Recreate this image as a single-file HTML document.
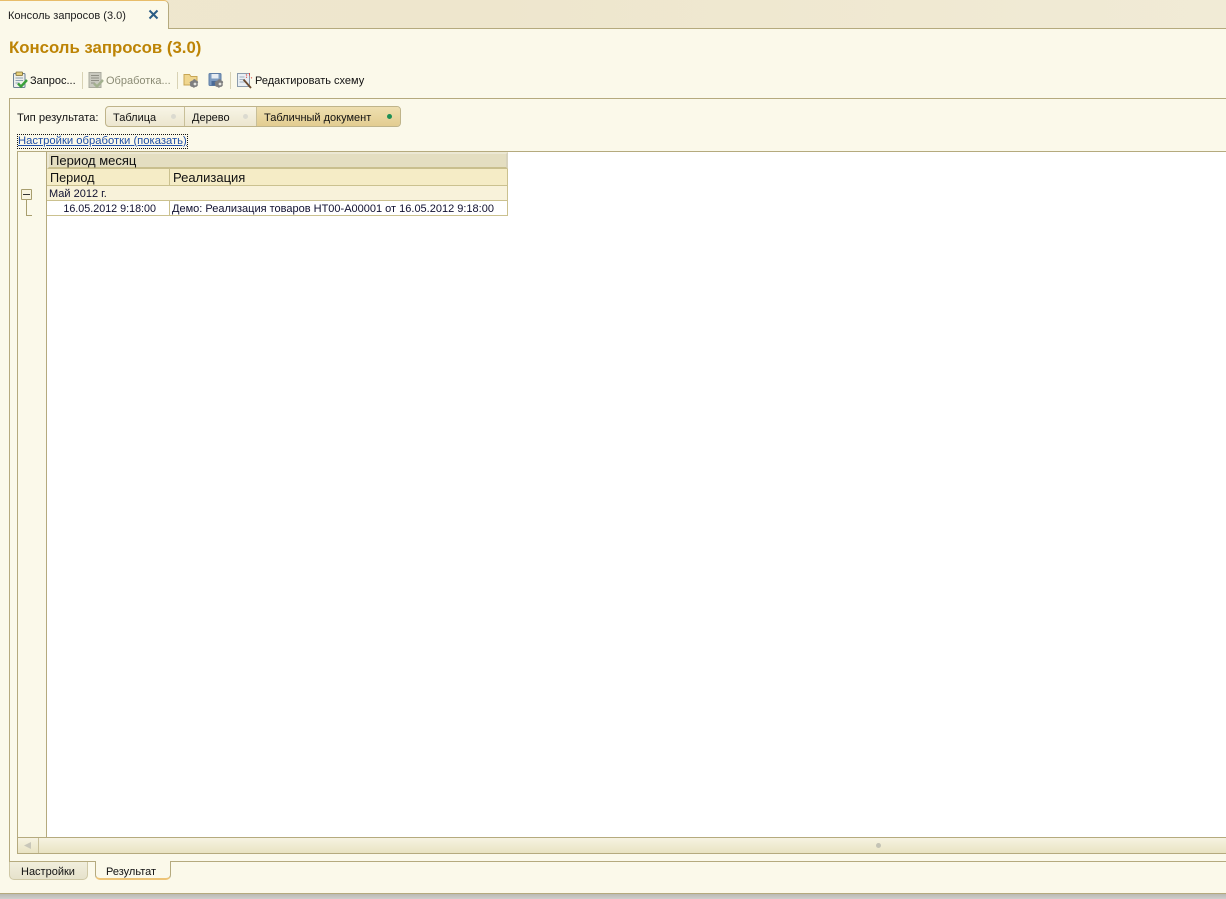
<!DOCTYPE html>
<html><head><meta charset="utf-8"><style>
html,body{margin:0;padding:0;width:1226px;height:899px;overflow:hidden;background:#fbf9ea;font-family:"Liberation Sans",sans-serif;color:#111}
div,a,span.a{position:absolute;box-sizing:border-box;white-space:nowrap}
svg{position:absolute}
.t{font-size:11px;line-height:14px}
.sep{width:1px;background:#d8d2b4;top:72px;height:17px}
</style></head><body>
<div style="left:0;top:0;width:1226px;height:29px;background:linear-gradient(90deg,#efe7ce,#eee6cd 40%,#f1ebd6);border-bottom:1px solid #b5aa7e"></div>
<div style="left:-3px;top:0;width:172px;height:29px;background:#fbf9ea;border:1px solid #b5aa7e;border-bottom:none;border-top:1px solid #e8bd6a;border-top-right-radius:5px"></div>
<div class="t" style="left:8px;top:9px;color:#1c1c1c">Консоль запросов (3.0)</div>
<svg style="left:148px;top:9px" width="11" height="11" viewBox="0 0 11 11"><path d="M1.500 1.500L9.500 9.500M9.500 1.500L1.500 9.500" stroke="#2b5d85" stroke-width="2"/></svg>
<div style="left:9px;top:38px;font-size:16.800px;line-height:20px;font-weight:bold;color:#bd8405">Консоль запросов (3.0)</div>

<svg style="left:12px;top:71px" width="17" height="18" viewBox="0 0 17 18"><rect x="1.500" y="2.500" width="11.500" height="14" rx="1" fill="#eef0ea" stroke="#6c8094"/><rect x="4" y="1" width="6.500" height="3.500" rx=".5" fill="#e6cf7a" stroke="#7c6c30" stroke-width=".8"/><path d="M3.500 7h7.500M3.500 9.500h7.500M3.500 12h4" stroke="#8ea0b2"/><path d="M6 12.500l3 3 6-6.500" stroke="#3aa03a" stroke-width="2.400" fill="none"/></svg>
<div class="t" style="left:30px;top:74px">Запрос...</div>
<div class="sep" style="left:82px"></div>
<svg style="left:88px;top:71px" width="17" height="18" viewBox="0 0 17 18"><rect x="1" y="1.500" width="12" height="15" fill="#c9c9bf" stroke="#aaaa9e"/><path d="M3 4.500h8M3 7h8M3 9.500h8M3 12h4" stroke="#8f8f85"/><path d="M6 12.500l3 3 6-6.500" stroke="#a3b18f" stroke-width="2.400" fill="none"/></svg>
<div class="t" style="left:106px;top:74px;color:#8b8b75">Обработка...</div>
<div class="sep" style="left:177px"></div>
<svg style="left:183px;top:72px" width="17" height="17" viewBox="0 0 17 17"><path d="M1 2.500h5.500l1.500 2h6v8.500H1z" fill="#f0d68e" stroke="#c8a755"/><path d="M8.200 8.700l1.800-.7.700-1.200h1.600l.7 1.200 1.800.7.600 1.300-.6 1.500.3 1.700-1.100 1.400-1.700.4-1.400.9-1.400-.9-1.700-.4-1.100-1.400.3-1.700-.6-1.500z" fill="#7f7f80" transform="translate(.4 .6) scale(.96)"/><circle cx="12" cy="12" r="1.400" fill="#e4e4e0"/></svg>
<svg style="left:208px;top:72px" width="17" height="17" viewBox="0 0 17 17"><rect x="1" y="1.500" width="12" height="12" rx="1" fill="#7d9bc0" stroke="#5f7ea6"/><rect x="3.500" y="2" width="7" height="4.500" fill="#e6ecf2"/><rect x="3.500" y="9" width="6" height="4.500" fill="#4a6a96"/><path d="M8.200 8.700l1.800-.7.700-1.200h1.600l.7 1.200 1.800.7.600 1.300-.6 1.500.3 1.700-1.100 1.400-1.700.4-1.400.9-1.400-.9-1.700-.4-1.100-1.400.3-1.700-.6-1.500z" fill="#7f7f80" transform="translate(.4 .6) scale(.96)"/><circle cx="12" cy="12" r="1.400" fill="#e4e4e0"/></svg>
<div class="sep" style="left:230px"></div>
<svg style="left:236px;top:72px" width="17" height="17" viewBox="0 0 17 17"><rect x="1.500" y="1.500" width="12" height="13" fill="#e9eff4" stroke="#8c9cac"/><path d="M3.500 5h5M3.500 7.500h4M3.500 10h5" stroke="#a3b1bf"/><path d="M7.500 7.500l7.500 8.500" stroke="#6b4a2e" stroke-width="1.800"/><path d="M10 2.500l1 1M13.500 1v2.500M15 5.500l1 .7M10 5.500l1-.5" stroke="#dc4a42"/></svg>
<div class="t" style="left:255px;top:74px">Редактировать схему</div>

<div style="left:9px;top:98px;width:1217px;height:764px;border-left:1px solid #b5aa7e;border-top:1px solid #b5aa7e;border-bottom:1px solid #b5aa7e"></div>
<div class="t" style="left:17px;top:111px;font-size:11.250px">Тип результата:</div>

<div style="left:105px;top:106px;width:296px;height:21px;border:1px solid #bfb48a;border-radius:4px;overflow:hidden;background:linear-gradient(#f8f5e6,#ece6cf)">
 <div style="left:150px;top:0;width:146px;height:20px;background:linear-gradient(#eedfb0,#e2cc8f)"></div>
 <div style="left:78px;top:0;width:1px;height:20px;background:#c8bf98"></div>
 <div style="left:150px;top:0;width:1px;height:20px;background:#c8bf98"></div>
</div>
<div class="t" style="left:113px;top:111px">Таблица</div>
<div style="left:171px;top:114px;width:5px;height:5px;border-radius:50%;background:#dbdad0"></div>
<div class="t" style="left:192px;top:111px">Дерево</div>
<div style="left:243px;top:114px;width:5px;height:5px;border-radius:50%;background:#dbdad0"></div>
<div class="t" style="left:264px;top:111px">Табличный документ</div>
<div style="left:387px;top:114px;width:5px;height:5px;border-radius:50%;background:#1d8f55"></div>

<div class="t" style="left:18px;top:135px;height:13px;line-height:13px;font-size:11.250px;color:#1f4fa8;text-decoration:underline;outline:1px dotted #111;outline-offset:0">Настройки обработки (показать)</div>

<div style="left:18px;top:151px;width:1208px;height:1px;background:#b5aa7e"></div>
<div style="left:17px;top:151px;width:1px;height:703px;background:#b5aa7e"></div>
<div style="left:46px;top:152px;width:1px;height:686px;background:#b5aa7e"></div>
<div style="left:47px;top:152px;width:1179px;height:686px;background:#fff"></div>

<div style="left:47px;top:152px;width:461px;height:17px;background:#e4dec1;border:2px solid #ece8d4;border-bottom:2px solid #c9bf8e;border-right-color:#d8d3bd"></div>
<div style="left:50px;top:153px;font-size:13px;line-height:16px">Период месяц</div>
<div style="left:47px;top:169px;width:461px;height:17px;background:#f5ecc6;border-bottom:1px solid #cbc18f;border-right:1px solid #cbc18f"></div>
<div style="left:169px;top:169px;width:1px;height:17px;background:#cbc18f"></div>
<div style="left:50px;top:170px;font-size:12.700px;line-height:16px">Период</div>
<div style="left:173px;top:170px;font-size:13px;line-height:16px">Реализация</div>
<div style="left:47px;top:186px;width:461px;height:15px;background:#f8f2da;border-bottom:1px solid #cbc18f;border-right:1px solid #cbc18f"></div>
<div style="left:49px;top:188px;font-size:11px;line-height:13px;color:#101030">Май 2012 г.</div>
<div style="left:47px;top:201px;width:461px;height:15px;background:#fff;border-bottom:1px solid #cbc18f;border-right:1px solid #cbc18f"></div>
<div style="left:169px;top:201px;width:1px;height:14px;background:#cbc18f"></div>
<div style="left:47px;top:203px;width:109px;text-align:right;font-size:10.750px;line-height:13px;color:#101030">16.05.2012 9:18:00</div>
<div style="left:172px;top:203px;font-size:11px;line-height:13px;color:#101030">Демо: Реализация товаров НТ00-А00001 от 16.05.2012 9:18:00</div>

<div style="left:21px;top:189px;width:11px;height:11px;background:#f8f4e0;border:1px solid #a89e6e;border-radius:1px"></div>
<div style="left:23px;top:194px;width:7px;height:1px;background:#333"></div>
<svg style="left:22px;top:200px" width="12" height="17" viewBox="0 0 12 17"><path d="M4.500 0V15.500H10" stroke="#a89e6e" fill="none"/></svg>

<div style="left:18px;top:837px;width:1208px;height:17px;background:linear-gradient(#f6f3e2,#e9e3c2);border-top:1px solid #b5aa7e;border-bottom:1px solid #b5aa7e"></div>
<div style="left:38px;top:838px;width:1px;height:15px;background:#c9c09a"></div>
<svg style="left:23px;top:841px" width="10" height="9" viewBox="0 0 10 9"><path d="M1 4.500L8 1V8z" fill="#c9c7b9"/></svg>
<div style="left:876px;top:843px;width:5px;height:5px;border-radius:50%;background:#c4c3b5"></div>

<div style="left:9px;top:861px;width:1217px;height:1px;background:#b5aa7e"></div>
<div style="left:9px;top:862px;width:79px;height:18px;background:linear-gradient(#f1eedd,#e6e2cc);border:1px solid #cfc8a6;border-top:none;border-radius:0 0 5px 5px"></div>
<div class="t" style="left:21px;top:865px">Настройки</div>
<div style="left:95px;top:861px;width:76px;height:19px;background:#fbf9ea;border:1px solid #b5aa7e;border-top:none;border-bottom:2px solid #edc477;border-radius:0 0 5px 5px"></div>
<div class="t" style="left:106px;top:865px">Результат</div>

<div style="left:0;top:893px;width:1226px;height:1px;background:#b5aa7e"></div>
<div style="left:0;top:894px;width:1226px;height:5px;background:linear-gradient(#b9b9b4,#cfcfcc)"></div>
</body></html>
